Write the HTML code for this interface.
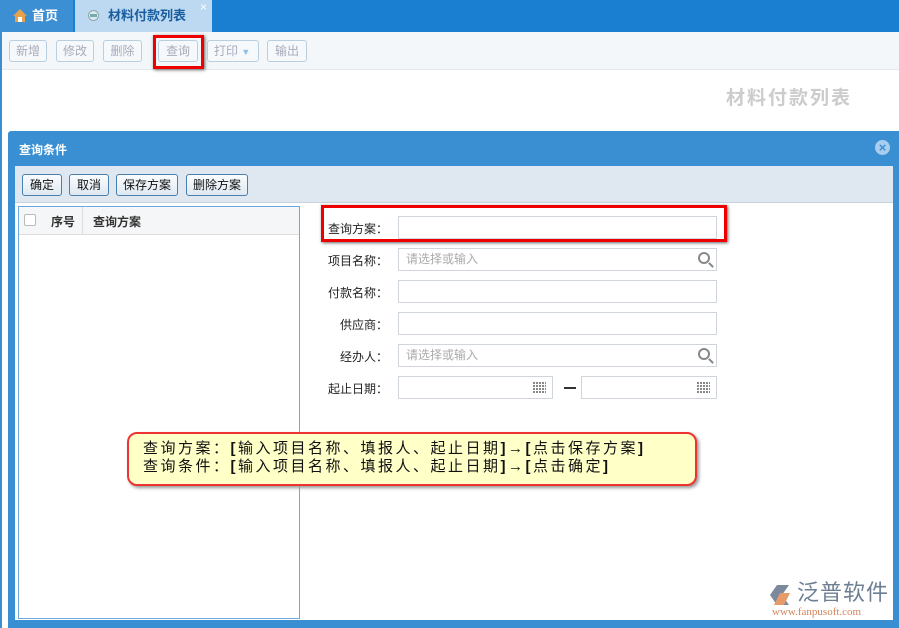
<!DOCTYPE html>
<html><head><meta charset="utf-8"><style>
*{margin:0;padding:0;box-sizing:border-box}
body{width:899px;height:628px;overflow:hidden;background:#fff;font-family:"Liberation Sans","Noto Sans CJK SC",sans-serif;font-size:12px;position:relative;color:#222}
.a{position:absolute}
.tb{border:1px solid #b9cfe0;border-radius:3px;color:#aab;background:#f6f9fb;height:22px;line-height:20px;text-align:center;font-size:12px}
.btn{position:absolute;top:174px;height:22px;border:1px solid #4a7fae;border-radius:3px;background:linear-gradient(#fafcfe,#dfe9f2);line-height:20px;text-align:center;font-size:12px;color:#111}
.lbl{position:absolute;left:310px;width:78px;text-align:right;font-size:12px;color:#222}
.inp{position:absolute;left:398px;width:319px;height:23px;border:1px solid #cfd5da;background:#fff;color:#aaa;padding-left:7px;line-height:21px;font-size:12px}
.mag{position:absolute;right:6px;top:3px;width:12px;height:12px;border:2px solid #888;border-radius:50%}
.mag:after{content:"";position:absolute;left:8px;top:10px;width:6px;height:2px;background:#888;transform:rotate(45deg)}
.cal{position:absolute;right:6px;top:5px;width:13px;height:11px;background:repeating-linear-gradient(90deg,#888 0 2px,transparent 2px 3px),#fff;-webkit-mask:repeating-linear-gradient(#000 0 2px,transparent 2px 3px)}
</style></head><body>
<div class="a" style="left:0;top:0;width:899px;height:32px;background:#1a7fd0"></div>
<div class="a" style="left:0;top:0;width:73px;height:32px;background:#3d8fd4;color:#fff;font-weight:bold;font-size:13px;line-height:31px;padding-left:32px">首页</div>
<div class="a" style="left:13px;top:9px;width:14px;height:13px;"><svg width="14" height="13"><path d="M7 0L0 7h2v6h10V7h2z" fill="#e8a14a"/><rect x="5" y="8" width="4" height="5" fill="#fff"/></svg></div>
<div class="a" style="left:75px;top:0;width:137px;height:32px;background:#bcd9f1;color:#1a5ea0;font-weight:bold;font-size:13px;line-height:31px;padding-left:33px">材料付款列表</div>
<div class="a" style="left:88px;top:10px;width:11px;height:11px;border-radius:50%;background:#dde8f2;border:1px solid #8aa;"><div style="margin:3px 1px;height:3px;background:#7aa"></div></div>
<div class="a" style="left:200px;top:0px;color:#fff;font-size:12px">×</div>
<div class="a" style="left:0;top:32px;width:899px;height:38px;background:#f3f7fa;border-bottom:1px solid #e3e9ee"></div>
<div class="a" style="left:0;top:32px;width:2px;height:596px;background:#3b8fd1"></div>
<div class="a tb" style="left:9px;top:40px;width:38px">新增</div>
<div class="a tb" style="left:56px;top:40px;width:38px">修改</div>
<div class="a tb" style="left:103px;top:40px;width:39px">删除</div>
<div class="a tb" style="left:158px;top:40px;width:40px">查询</div>
<div class="a" style="left:153px;top:35px;width:51px;height:34px;border:3px solid #e00;box-shadow:1px 1px 3px #666"></div>
<div class="a tb" style="left:207px;top:40px;width:52px;text-align:left;padding-left:6px">打印 <span style="color:#8bc0ea;font-size:9px">▼</span></div>
<div class="a tb" style="left:267px;top:40px;width:40px">输出</div>
<div class="a" style="left:726px;top:83px;font-size:19px;color:#ccc;font-weight:bold;letter-spacing:2px">材料付款列表</div>

<div class="a" style="left:8px;top:131px;width:891px;height:497px;background:#3a8fd2;border-radius:3px 0 0 0"></div>
<div class="a" style="left:19px;top:141px;color:#fff;font-weight:bold;font-size:12px">查询条件</div>
<div class="a" style="left:875px;top:140px;width:15px;height:15px;border-radius:50%;background:#a9cdee;color:#3a8fd2;font-weight:bold;font-size:13px;line-height:15px;text-align:center">×</div>
<div class="a" style="left:15px;top:166px;width:878px;height:454px;background:#fff"></div>
<div class="a" style="left:15px;top:166px;width:878px;height:37px;background:#dfe8f0;border-bottom:1px solid #c8d2da"></div>
<div class="btn" style="left:22px;width:40px">确定</div>
<div class="btn" style="left:69px;width:40px">取消</div>
<div class="btn" style="left:116px;width:62px">保存方案</div>
<div class="btn" style="left:186px;width:62px">删除方案</div>
<div class="a" style="left:18px;top:206px;width:282px;height:413px;border:1px solid #6ea8dc"></div>
<div class="a" style="left:19px;top:207px;width:280px;height:28px;background:#f5f6f7;border-bottom:1px solid #ddd"></div>
<div class="a" style="left:24px;top:214px;width:12px;height:12px;border:1px solid #bbb;background:#fff;border-radius:2px"></div>
<div class="a" style="left:51px;top:213px;font-weight:bold;color:#333">序号</div>
<div class="a" style="left:82px;top:207px;width:1px;height:28px;background:#ddd"></div>
<div class="a" style="left:93px;top:213px;font-weight:bold;color:#333">查询方案</div>

<div class="lbl" style="top:220px">查询方案：</div><div class="inp" style="top:216px"></div>
<div class="a" style="left:321px;top:205px;width:406px;height:37px;border:3px solid #e00;box-shadow:1px 1px 3px #666"></div>
<div class="lbl" style="top:252px">项目名称：</div><div class="inp" style="top:248px">请选择或输入<div class="mag"></div></div>
<div class="lbl" style="top:284px">付款名称：</div><div class="inp" style="top:280px"></div>
<div class="lbl" style="top:316px">供应商：</div><div class="inp" style="top:312px"></div>
<div class="lbl" style="top:348px">经办人：</div><div class="inp" style="top:344px">请选择或输入<div class="mag"></div></div>
<div class="lbl" style="top:380px">起止日期：</div><div class="inp" style="top:376px;width:155px"><div class="cal"></div></div>
<div class="a" style="left:564px;top:387px;width:12px;height:2px;background:#333"></div>
<div class="inp" style="left:581px;top:376px;width:136px"><div class="cal"></div></div>

<div class="a" style="left:127px;top:432px;width:570px;height:54px;background:#ffffc8;border:2px solid #e33;border-radius:10px;box-shadow:2px 2px 3px #999;padding:6px 0 0 14px;font-size:15px;line-height:18px;color:#111;letter-spacing:2.5px;white-space:nowrap">查询方案：<b>[</b>输入项目名称、填报人、起止日期<b>]</b>→<b>[</b>点击保存方案<b>]</b><br>查询条件：<b>[</b>输入项目名称、填报人、起止日期<b>]</b>→<b>[</b>点击确定<b>]</b></div>

<div class="a" style="left:768px;top:584px"><svg width="26" height="22"><path d="M9 1h12L14 11l7 10H9L2 11z" fill="#7a8a9c"/><path d="M12 9h10l-6 12H6z" fill="#e79a6a"/></svg></div>
<div class="a" style="left:797px;top:580px;font-size:22px;color:#6e7f94;letter-spacing:1px;line-height:26px">泛普软件</div>
<div class="a" style="left:772px;top:606px;font-size:11px;color:#d4845a;font-family:'Liberation Serif',serif">www.fanpusoft.com</div>
</body></html>
